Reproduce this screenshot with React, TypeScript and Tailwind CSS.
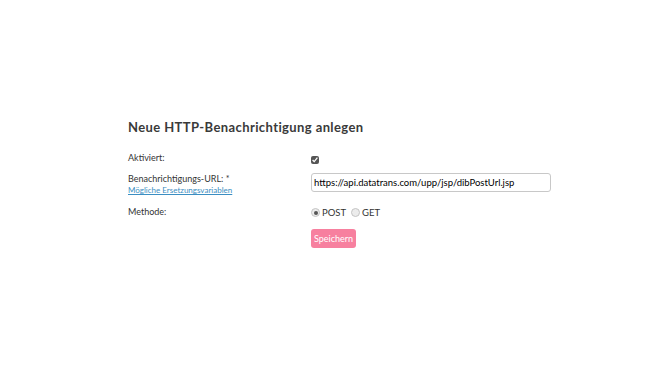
import React from "react";

function Radio({ checked }: { checked?: boolean }) {
  return (
    <span className="w-[9px] h-[9px] rounded-full border border-[#c4c4c4] bg-[#ececec] flex items-center justify-center shrink-0">
      {checked && <span className="w-[4px] h-[4px] rounded-full bg-[#555]" />}
    </span>
  );
}

export default function App() {
  return (
    <div className="w-[666px] h-[374px] bg-white" style={{ fontFamily: "Lato, 'Open Sans', sans-serif" }}>
      <div className="pt-[119px] pl-[128px]">
        <h1 className="text-[13px] leading-[16px] font-bold text-[#3a3a3a] tracking-[0.4px]">
          Neue HTTP-Benachrichtigung anlegen
        </h1>
        <div className="mt-[17px] flex flex-col text-[9px] text-[#333]">
          <div className="flex items-start h-[20px]">
            <div className="w-[183px] leading-[11px]">Aktiviert:</div>
            <div className="pt-[2px]">
              <input type="checkbox" defaultChecked className="w-[8px] h-[8px] m-0 accent-[#555]" />
            </div>
          </div>
          <div className="flex items-start mt-[1px]">
            <div className="w-[183px] leading-[11px]">
              <div>Benachrichtigungs-URL: *</div>
              <a href="#" className="text-[#3b8ec2] underline text-[8px]">Mögliche Ersetzungsvariablen</a>
            </div>
            <input
              type="text"
              defaultValue="https://api.datatrans.com/upp/jsp/dibPostUrl.jsp"
              className="w-[240px] h-[19px] border border-[#c8c8c8] rounded-[3px] px-[2px] text-[9.5px] text-black outline-none"
              style={{ fontFamily: "Lato, sans-serif" }}
            />
          </div>
          <div className="flex items-start mt-[10px]">
            <div className="w-[183px] leading-[11px]">Methode:</div>
            <div className="flex items-center leading-[11px] pt-[1px]">
              <Radio checked />
              <span className="text-[9.5px] ml-[2px]">POST</span>
              <span className="ml-[5px]"><Radio /></span>
              <span className="text-[9.5px] ml-[2px]">GET</span>
            </div>
          </div>
          <div className="flex mt-[11px]">
            <div className="w-[183px]" />
            <button className="h-[19px] px-[3px] rounded-[3px] bg-[#f7809f] text-white text-[9px]">
              Speichern
            </button>
          </div>
        </div>
      </div>
    </div>
  );
}
